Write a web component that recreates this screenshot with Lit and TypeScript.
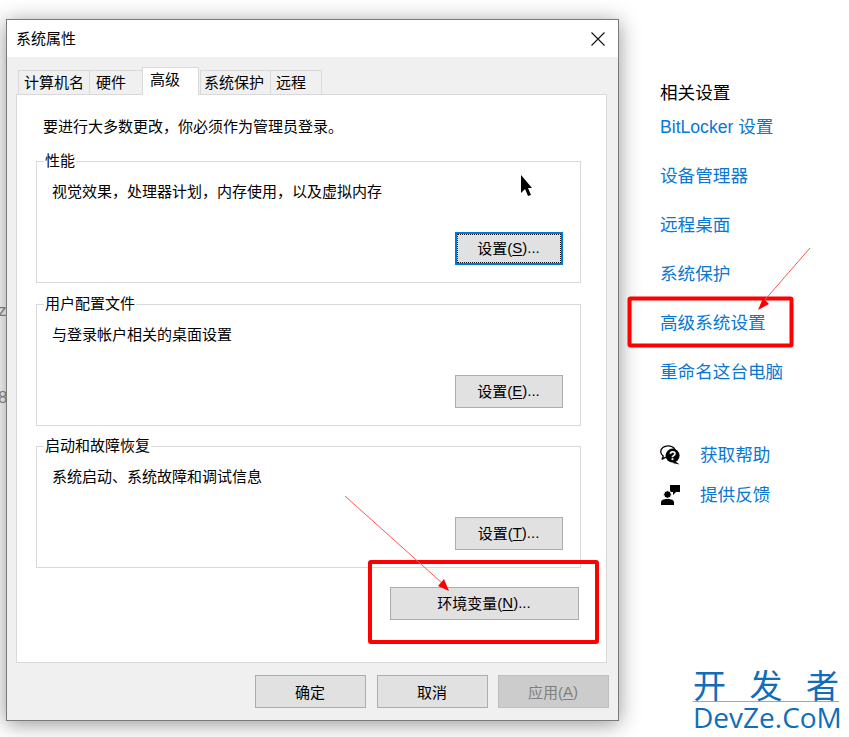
import { LitElement, html, css, svg } from "lit";
import { customElement } from "lit/decorators.js";

@customElement("app-root")
export class AppRoot extends LitElement {
  static styles = css`
    :host {
      display: block;
      position: relative;
      width: 849px;
      height: 737px;
      overflow: hidden;
      background: #fff;
      font-family: "Liberation Sans", "Noto Sans CJK SC", sans-serif;
      color: #000;
    }
    .page { display: flex; align-items: flex-start; padding: 19px 0 0 6px; height: 718px; }
    .window {
      width: 613px;
      height: 702px;
      box-sizing: border-box;
      flex: none;
      border: 1px solid #7a7a7a;
      background: #f0f0f0;
      box-shadow: 0 3px 20px rgba(0,0,0,.42);
      display: flex;
      flex-direction: column;
      font-size: 15px;
    }
    .title {
      height: 37px;
      flex: none;
      background: #fff;
      display: flex;
      align-items: center;
      justify-content: space-between;
      padding: 0 13px 2px 9px;
      box-sizing: border-box;
    }
    .close { width: 14px; height: 14px; display: block; margin-top: 2px; }
    .tabs { display: flex; padding: 10px 0 0 11px; height: 27px; flex: none; align-items: flex-end; position: relative; z-index: 1; }
    .tab {
      box-sizing: border-box;
      height: 24px;
      border: 1px solid #d9d9d9;
      border-bottom: none;
      margin-right: -1px;
      padding-left: 5px;
      line-height: 23px;
      white-space: nowrap;
      background: #f0f0f0;
    }
    .tab.active {
      height: 28px;
      background: #fff;
      margin: 0 1px 0 0;
      padding-left: 7px;
      line-height: 23px;
      position: relative;
      top: 1px;
      align-self: flex-end;
    }
    .tab-1 { width: 72px; }
    .tab-2 { width: 54px; padding-left: 6px; }
    .tab-3 { width: 57px; }
    .tab-4 { width: 71px; padding-left: 3px; }
    .tab-5 { width: 52px; }
    .panel {
      margin: 0 11px 0 9px;
      height: 569px;
      box-sizing: border-box;
      flex: none;
      background: #fff;
      border: 1px solid #d9d9d9;
      padding: 21px 25px 0 19px;
      display: flex;
      flex-direction: column;
    }
    .intro { height: 22px; line-height: 22px; margin: 0 0 23px 7px; white-space: nowrap; }
    .group {
      position: relative;
      box-sizing: border-box;
      height: 122px;
      border: 1px solid #d9d9d9;
      margin-bottom: 20px;
      padding: 19px 17px 0 15px;
      display: flex;
      flex-direction: column;
    }
    .group.first { margin-bottom: 21px; }
    .legend {
      position: absolute;
      left: 7px;
      top: -12px;
      height: 21px;
      line-height: 21px;
      padding: 0 1px;
      background: #fff;
      white-space: nowrap;
    }
    .desc { line-height: 22px; height: 22px; white-space: nowrap; }
    .btn {
      box-sizing: border-box;
      height: 33px;
      border: 1px solid #adadad;
      background: #e1e1e1;
      display: flex;
      align-items: center;
      justify-content: center;
      white-space: nowrap;
      font-size: 15px;
      padding: 0 1px 2px 0;
    }
    .btn.small { width: 108px; margin: 29px 0 0 auto; }
    .btn.focus {
      border: 2px solid #0078d7;
      outline: 1px dotted #111;
      outline-offset: -3px;
    }
    .btn.env { width: 189px; margin: -1px 2px 0 auto; }
    .footer { display: flex; justify-content: flex-end; gap: 10px; padding: 12px 9px 0 0; }
    .footer .btn { width: 111px; padding-bottom: 0; }
    .footer .btn.ok { margin-right: 1px; }
    .btn.disabled { background: #ccc; border-color: #bfbfbf; color: #7f7f7f; }
    u { text-underline-offset: 2px; }
    .side { margin-left: 41px; padding-top: 62px; font-size: 17.6px; flex: none; }
    .side-title { height: 24px; line-height: 24px; margin-bottom: 10px; white-space: nowrap; }
    .link { height: 24px; line-height: 24px; color: #0a78d2; margin-bottom: 25px; white-space: nowrap; }
    .help { display: grid; grid-template-columns: 20px auto; column-gap: 20px; row-gap: 16px; margin-top: 59px; align-items: center; }
    .help .link { margin: 0; }
    .help svg { display: block; }
    .clip { position: absolute; left: -2px; color: #777; line-height: 18px; font-size: 17px; }
    .overlay { position: absolute; left: 0; top: 0; pointer-events: none; }
    .mark { position: absolute; left: 693px; top: 668px; width: 146px; color: #116db8; }
    .mark-cn { display: flex; justify-content: space-between; font-size: 33px; line-height: 33px; height: 33px; font-family: "Noto Sans CJK SC", sans-serif; }
    .mark-line { height: 1px; background: #55c1f2; }
    .mark-en { font-size: 28px; line-height: 28px; margin-top: 1px; white-space: nowrap; font-family: "Open Sans", sans-serif; }
  `;

  private group(title: string, desc: string, btn: unknown, first = false, focus = false) {
    return html`<div class="group ${first ? "first" : ""}">
      <div class="legend">${title}</div>
      <div class="desc">${desc}</div>
      <div class="btn small ${focus ? "focus" : ""}">${btn}</div>
    </div>`;
  }

  render() {
    return html`
      <div class="page">
        <div class="window">
          <div class="title">
            <span>系统属性</span>
            <svg class="close" viewBox="0 0 14 14"><path d="M.5.5l13 13M13.500.5l-13 13" stroke="#111" stroke-width="1.1" fill="none"/></svg>
          </div>
          <div class="tabs">
            <div class="tab tab-1">计算机名</div>
            <div class="tab tab-2">硬件</div>
            <div class="tab active tab-3">高级</div>
            <div class="tab tab-4">系统保护</div>
            <div class="tab tab-5">远程</div>
          </div>
          <div class="panel">
            <div class="intro">要进行大多数更改，你必须作为管理员登录。</div>
            ${this.group("性能", "视觉效果，处理器计划，内存使用，以及虚拟内存", html`设置(<u>S</u>)...`, true, true)}
            ${this.group("用户配置文件", "与登录帐户相关的桌面设置", html`设置(<u>E</u>)...`)}
            ${this.group("启动和故障恢复", "系统启动、系统故障和调试信息", html`设置(<u>T</u>)...`)}
            <div class="btn env">环境变量(<u>N</u>)...</div>
          </div>
          <div class="footer">
            <div class="btn ok">确定</div>
            <div class="btn">取消</div>
            <div class="btn disabled">应用(<u>A</u>)</div>
          </div>
        </div>
        <div class="side">
          <div class="side-title">相关设置</div>
          <div class="link">BitLocker 设置</div>
          <div class="link">设备管理器</div>
          <div class="link">远程桌面</div>
          <div class="link">系统保护</div>
          <div class="link">高级系统设置</div>
          <div class="link">重命名这台电脑</div>
          <div class="help">
            <svg width="20" height="20" viewBox="0 0 20 20">
              <path d="M8 .8C4 .8.7 3.300.7 6.600c0 1.900 1 3.400 2.600 4.500l-1.200 3 4-2" fill="#fff" stroke="#000" stroke-width="1.300" stroke-linejoin="round"/>
              <path d="M8 .8c3.200 0 5.600 1.300 6.700 3.300" fill="none" stroke="#000" stroke-width="1.300"/>
              <circle cx="12.600" cy="10.600" r="7" fill="#000"/><path d="M15 16l4.500 3.400-7-1.400z" fill="#000"/>
              <text x="12.600" y="15" font-size="12" font-weight="700" text-anchor="middle" fill="#fff" font-family="Liberation Sans">?</text>
            </svg>
            <div class="link">获取帮助</div>
            <svg width="20" height="20" viewBox="0 0 20 20">
              <path d="M10 0h10v7h-4l-3 3V7h-3z" fill="#000"/>
              <circle cx="7.500" cy="9.500" r="3.800" fill="#000" stroke="#fff" stroke-width="1"/>
              <path d="M1 20v-2.500c0-2.500 2.600-3.500 6.500-3.500s6.500 1 6.500 3.500V20z" fill="#000"/>
            </svg>
            <div class="link">提供反馈</div>
          </div>
        </div>
      </div>
      <div class="clip" style="top:302px">z</div>
      <div class="clip" style="top:389px">8</div>
      <svg class="overlay" width="849" height="737" viewBox="0 0 849 737">
        ${svg`
        <rect x="629.500" y="298.500" width="162" height="47" rx="1" fill="none" stroke="#fe0000" stroke-width="4"/>
        <rect x="370" y="562" width="227" height="80" rx="1" fill="none" stroke="#fe0000" stroke-width="4"/>
        <path d="M810 248L763 302" stroke="#f55" stroke-width="1" fill="none"/>
        <path d="M758 310l5-12 6 6z" fill="#fe0000"/>
        <path d="M345 496L442 583" stroke="#f55" stroke-width="1" fill="none"/>
        <path d="M449 591l-11-5 6-7z" fill="#fe0000"/>
        <path d="M521 175v18l4-4 3 7 3-1-3-7h4z" fill="#000"/>
        `}
      </svg>
      <div class="mark">
        <div class="mark-cn"><span>开</span><span>发</span><span>者</span></div>
        <div class="mark-line"></div>
        <div class="mark-en">DevZe.CoM</div>
      </div>
    `;
  }
}
